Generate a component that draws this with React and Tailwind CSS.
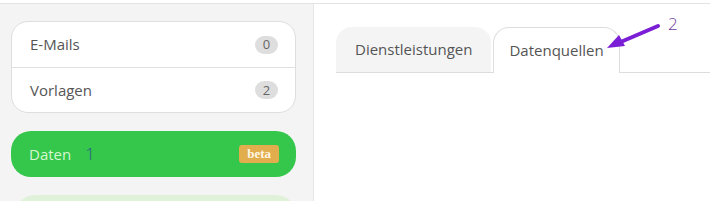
import React from 'react';

const Badge = ({ children }) => (
  <span className="flex h-[18px] min-w-[23px] items-center justify-center rounded-full bg-[#dedede] px-1.5 text-[13px] leading-none text-[#666]">
    {children}
  </span>
);

const Sidebar = () => (
  <aside className="flex w-[314px] shrink-0 flex-col gap-[18px] overflow-hidden border-r border-[#e6e6e6] bg-[#f4f4f4] pl-[11px] pr-[17px] pt-[17px]">
    <div className="shrink-0 overflow-hidden rounded-[17px] border border-[#dedede] bg-white">
      <div className="flex h-[46px] items-center justify-between border-b border-[#e0e0e0] pl-[18px] pr-[17px]">
        <span className="text-[15px] text-[#555]">E-Mails</span>
        <Badge>0</Badge>
      </div>
      <div className="flex h-[44px] items-center justify-between pl-[18px] pr-[17px]">
        <span className="text-[15px] text-[#555]">Vorlagen</span>
        <Badge>2</Badge>
      </div>
    </div>
    <div className="flex h-[46px] shrink-0 items-center justify-between rounded-[20px] bg-[#35c74b] pl-[18px] pr-[17px]">
      <span className="flex items-center text-[15px] text-[#d4f7d0]">
        Daten
        <span className="ml-[14px] text-[17px] font-light text-[#2d5a8e]">1</span>
      </span>
      <span className="rounded-[3px] bg-[#e2ad4d] px-[8px] py-[1px] text-[13px] font-bold leading-[16px] text-[#fff8e6] [font-family:'Liberation_Serif',serif]">
        beta
      </span>
    </div>
    <div className="ml-[4px] h-[40px] shrink-0 rounded-[20px] bg-[#dff1d9]" />
  </aside>
);

const Arrow = () => (
  <svg className="absolute left-[600px] top-[18px]" width="66" height="36" viewBox="0 0 66 36">
    <path d="M58 8 L16 26" stroke="#7b1fd6" strokeWidth="4" strokeLinecap="round" fill="none" />
    <path d="M7 30 L19 17 L25 28 Z" fill="#7b1fd6" />
  </svg>
);

export default function App() {
  return (
    <div className="relative h-[201px] w-[710px] overflow-hidden bg-white [font-family:'Open_Sans',sans-serif]">
      <div className="h-[4px] border-b border-[#e3e3e3] bg-white" />
      <div className="flex h-[197px]">
        <Sidebar />
        <main className="flex-1 bg-white pl-[22px] pt-[23px]">
          <div className="flex items-end border-b border-[#dddddd]">
            <div className="flex h-[45px] items-center rounded-t-[16px] bg-[#f4f4f4] px-[19px] text-[15px] text-[#555]">
              Dienstleistungen
            </div>
            <div className="-mb-px ml-[2px] flex h-[46px] items-center rounded-t-[16px] border border-b-0 border-[#dddddd] bg-white px-[15px] text-[15px] text-[#555]">
              Datenquellen
            </div>
          </div>
        </main>
      </div>
      <Arrow />
      <span className="absolute left-[668px] top-[14px] text-[17px] font-light leading-[20px] text-[#6b3a9c]">2</span>
    </div>
  );
}
